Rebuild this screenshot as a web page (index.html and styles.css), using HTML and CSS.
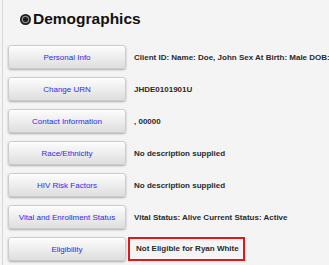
FILE: index.html
```html
<!DOCTYPE html>
<html lang="en">
<head>
  <meta charset="UTF-8" />
  <title>Demographics</title>
  <link rel="stylesheet" href="styles.css">
</head>
<body>
  <div class="page">
    <h1 class="title">
      <svg class="title-icon" width="11" height="11" viewBox="0 0 11 11">
        <circle cx="5.5" cy="5.5" r="5.5" fill="#1c1c1c" />
        <circle cx="5.5" cy="5.5" r="3.8" fill="#8a8a8a" />
        <circle cx="5.5" cy="5.5" r="2.5" fill="#1c1c1c" />
      </svg>Demographics
    </h1>

    <div class="rows">
      <div class="row">
        <button class="btn">Personal Info</button>
        <div class="value">Client ID: Name: Doe, John Sex At Birth: Male DOB:</div>
      </div>
      <div class="row">
        <button class="btn">Change URN</button>
        <div class="value">JHDE0101901U</div>
      </div>
      <div class="row">
        <button class="btn">Contact Information</button>
        <div class="value">, 00000</div>
      </div>
      <div class="row">
        <button class="btn">Race/Ethnicity</button>
        <div class="value">No description supplied</div>
      </div>
      <div class="row">
        <button class="btn">HIV Risk Factors</button>
        <div class="value">No description supplied</div>
      </div>
      <div class="row">
        <button class="btn">Vital and Enrollment Status</button>
        <div class="value">Vital Status: Alive Current Status: Active</div>
      </div>
      <div class="row">
        <button class="btn">Eligibility</button>
        <div class="value"><span class="flag">Not Eligible for Ryan White</span></div>
      </div>
    </div>
  </div>
</body>
</html>
```

FILE: styles.css
```css
body {
  margin: 0;
  background: #f4f4f4;
  font-family: 'Liberation Sans', Arial, sans-serif;
  color: #222;
}

.page {
  margin-left: 2px;
  border-left: 1px solid #d8d8d8;
  padding: 10px 0 0 5px;
  height: 255px;
  overflow: hidden;
}

.title {
  display: flex;
  align-items: center;
  margin: 0 0 17px 12px;
  font-size: 15.5px;
  line-height: 18px;
  font-weight: bold;
  color: #111;
}

.title-icon {
  margin-right: 2px;
}

.rows {
  display: flex;
  flex-direction: column;
  gap: 8px;
}

.row {
  display: flex;
  align-items: center;
  height: 24px;
  white-space: nowrap;
}

.btn {
  width: 118px;
  height: 24px;
  flex: none;
  padding: 0;
  border: 1px solid #cccccc;
  border-radius: 3px;
  background: linear-gradient(to bottom, #fdfdfd, #dedede);
  box-shadow: 0 1px 2px rgba(0,0,0,0.3);
  font-family: 'Liberation Sans', Arial, sans-serif;
  font-size: 8px;
  color: #2b2bf0;
}

.value {
  margin-left: 2px;
  font-size: 8px;
  font-weight: bold;
  color: #2a2a2a;
}

.value:not(:has(.flag)) {
  padding-left: 6px;
}

.flag {
  display: inline-block;
  padding: 5px 6px;
  width: 101px;
  border: 2px solid #e01818;
  line-height: 10px;
}
```
